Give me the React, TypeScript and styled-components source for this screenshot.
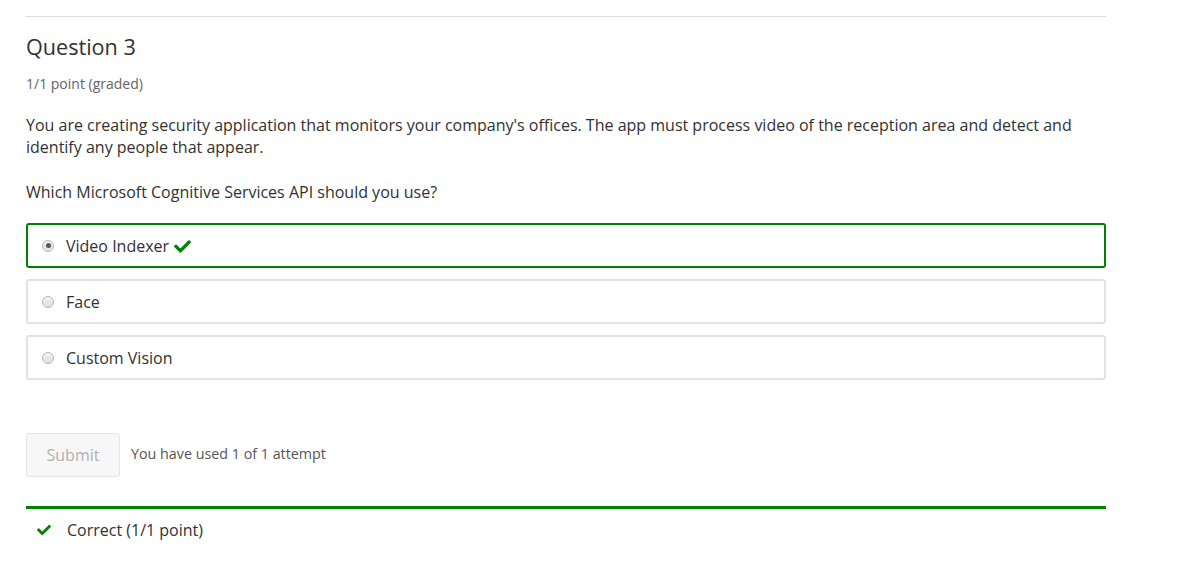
import React from "react";
import styled, { createGlobalStyle } from "styled-components";
import { FaCheck } from "react-icons/fa";

const Global = createGlobalStyle`
  html, body { margin: 0; padding: 0; background: #fff; }
  body { font-family: "Open Sans", "Noto Sans", sans-serif; color: #313131; }
`;

const GREEN = "#008100";

const Wrapper = styled.div`
  width: 1080px;
  padding: 16px 0 0 26px;
`;

const Rule = styled.div`
  border-top: 1px solid #ddd;
`;

const Title = styled.h3`
  margin: 17px 0 0;
  font-size: 21.6px;
  line-height: 26px;
  font-weight: 400;
  color: #313131;
`;

const Points = styled.div`
  margin-top: 14px;
  font-size: 14px;
  line-height: 19px;
  color: #646464;
`;

const Para = styled.p<{ $top: number }>`
  margin: ${(p) => p.$top}px 0 0;
  font-size: 16px;
  line-height: 22px;
  color: #313131;
`;

const Options = styled.div`
  margin-top: 20px;
  display: flex;
  flex-direction: column;
  gap: 11px;
`;

const Option = styled.label<{ $correct?: boolean }>`
  box-sizing: border-box;
  height: 45px;
  display: flex;
  align-items: center;
  padding-left: 14px;
  border: 2px solid ${(p) => (p.$correct ? GREEN : "#e2e2e2")};
  border-radius: 3px;
  font-size: 16px;
  color: #313131;
`;

const Radio = styled.span<{ $checked?: boolean }>`
  box-sizing: border-box;
  width: 12px;
  height: 12px;
  border-radius: 50%;
  border: 1px solid #b9b9b9;
  background: linear-gradient(#f4f4f4, #dcdcdc);
  margin-right: 12px;
  display: flex;
  align-items: center;
  justify-content: center;
  &::after {
    content: "";
    display: ${(p) => (p.$checked ? "block" : "none")};
    width: 5px;
    height: 5px;
    border-radius: 50%;
    background: #555;
  }
`;

const Check = styled(FaCheck)`
  color: ${GREEN};
  font-size: 17px;
  margin-left: 5px;
  position: relative;
  top: 1px;
`;

const ActionRow = styled.div`
  margin-top: 53px;
  display: flex;
  align-items: center;
`;

const Submit = styled.button`
  box-sizing: border-box;
  width: 94px;
  height: 44px;
  border: 1px solid #e4e4e4;
  border-radius: 3px;
  background: #f7f7f7;
  color: #b0b0b0;
  font-family: "Open Sans", sans-serif;
  font-size: 16px;
  padding: 0;
`;

const Attempts = styled.span`
  margin-left: 11px;
  font-size: 14.3px;
  color: #555;
  position: relative;
  top: -2px;
`;

const Status = styled.div`
  margin-top: 29px;
  border-top: 3px solid ${GREEN};
  display: flex;
  align-items: center;
  padding: 10px 0 0 11px;
  font-size: 16px;
  line-height: 22px;
  color: #313131;
`;

const StatusCheck = styled(FaCheck)`
  color: ${GREEN};
  font-size: 14px;
  margin-right: 16px;
`;

export default function App() {
  return (
    <>
      <Global />
      <Wrapper>
        <Rule />
        <Title>Question 3</Title>
        <Points>1/1 point (graded)</Points>
        <Para $top={21}>
          You are creating security application that monitors your company's offices. The app must process video of the
          reception area and detect and identify any people that appear.
        </Para>
        <Para $top={23}>Which Microsoft Cognitive Services API should you use?</Para>
        <Options>
          <Option $correct>
            <Radio $checked />
            Video Indexer
            <Check />
          </Option>
          <Option>
            <Radio />
            Face
          </Option>
          <Option>
            <Radio />
            Custom Vision
          </Option>
        </Options>
        <ActionRow>
          <Submit disabled>Submit</Submit>
          <Attempts>You have used 1 of 1 attempt</Attempts>
        </ActionRow>
        <Status>
          <StatusCheck />
          Correct (1/1 point)
        </Status>
      </Wrapper>
    </>
  );
}
